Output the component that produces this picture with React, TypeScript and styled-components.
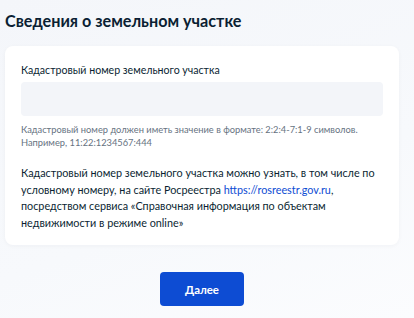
import React from 'react'
import styled, { createGlobalStyle } from 'styled-components'

const GlobalStyle = createGlobalStyle`
  html, body {
    margin: 0;
    padding: 0;
    background: #f5f7fb;
  }
  body {
    font-family: Lato, 'Noto Sans', Arial, sans-serif;
    color: #0b1f33;
  }
`

const Page = styled.div`
  width: 414px;
  height: 318px;
  box-sizing: border-box;
  padding: 9px 15px 0 5px;
  background: linear-gradient(160deg, #f4f6fa 0%, #f7f9fc 60%, #fbfcfe 100%);
`

const Title = styled.h1`
  margin: 0;
  font-size: 16.2px;
  line-height: 24px;
  font-weight: 700;
  color: #0b1f33;
`

const Card = styled.div`
  margin-top: 13px;
  background: #fff;
  border-radius: 8px;
  padding: 17px 16px 14px 16px;
  box-shadow: 0 1px 4px rgba(11, 31, 51, 0.04);
`

const Label = styled.div`
  font-size: 10.6px;
  line-height: 14px;
  color: #0b1f33;
  margin-bottom: 5px;
`

const Input = styled.input`
  display: block;
  width: 100%;
  box-sizing: border-box;
  height: 34px;
  border: none;
  outline: none;
  border-radius: 4px;
  background: #f3f5f9;
  padding: 0 12px;
  font-family: inherit;
  font-size: 12px;
`

const Hint = styled.div`
  margin-top: 7px;
  font-size: 9.3px;
  line-height: 13px;
  color: #66727f;
`

const Info = styled.p`
  margin: 16px 0 0;
  font-size: 10.8px;
  line-height: 16.5px;
  color: #0b1f33;
`

const Link = styled.a`
  color: #0d4cd3;
  text-decoration: none;
`

const Footer = styled.div`
  display: flex;
  justify-content: center;
  padding-top: 27px;
`

const Button = styled.button`
  width: 84px;
  height: 34px;
  border: none;
  border-radius: 4px;
  background: #0d4cd3;
  color: #fff;
  font-family: inherit;
  font-size: 11.4px;
  font-weight: 700;
  cursor: pointer;
`

const App: React.FC = () => {
  return (
    <>
      <GlobalStyle />
      <Page>
        <Title>Сведения о земельном участке</Title>
        <Card>
          <Label>Кадастровый номер земельного участка</Label>
          <Input type="text" />
          <Hint>
            Кадастровый номер должен иметь значение в формате: 2:2:4-7:1-9 символов.
            <br />
            Например, 11:22:1234567:444
          </Hint>
          <Info>
            Кадастровый номер земельного участка можно узнать, в том числе по
            <br />
            условному номеру, на сайте Росреестра <Link href="#">https://rosreestr.gov.ru</Link>,
            <br />
            посредством сервиса «Справочная информация по объектам
            <br />
            недвижимости в режиме online»
          </Info>
        </Card>
        <Footer>
          <Button>Далее</Button>
        </Footer>
      </Page>
    </>
  )
}

export default App
